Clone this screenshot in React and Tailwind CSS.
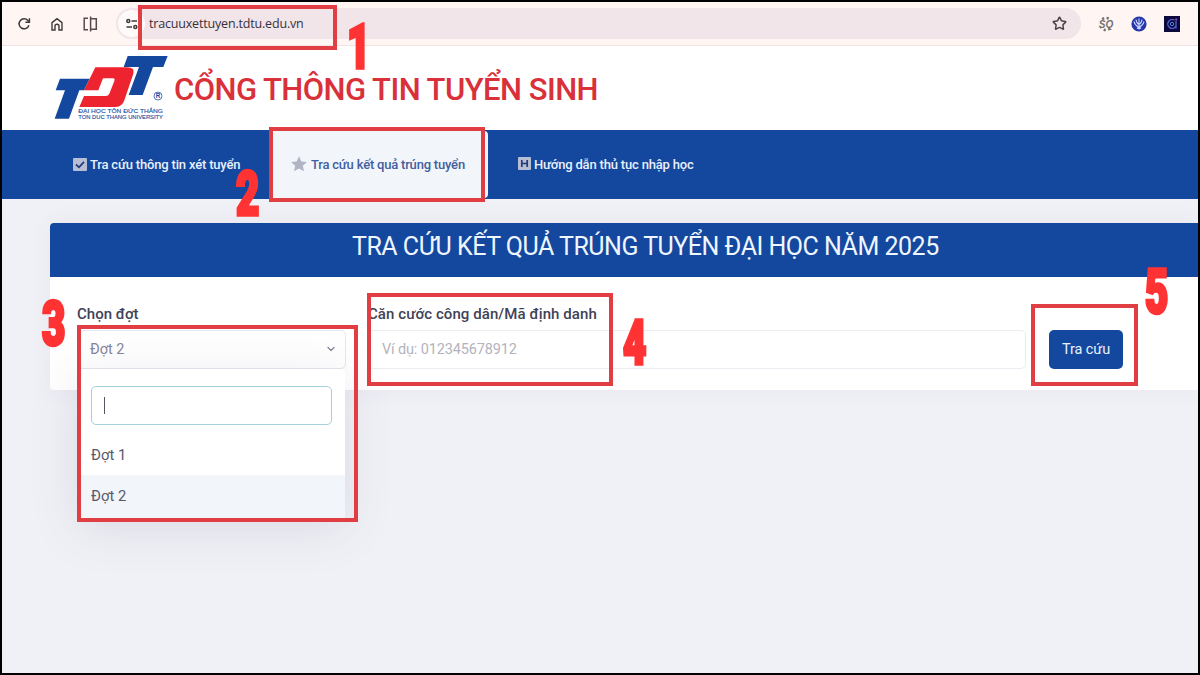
import React from "react";
import { ChevronDown, Star } from "lucide-react";

function ReloadIcon() {
  return (
    <svg className="h-[14px] w-[14px]" viewBox="0 0 14 14" fill="none" stroke="#3f3a3d" strokeWidth="1.5">
      <path d="M11.9 8.2A5 5 0 1 1 10.9 3.6L12.2 5" />
      <path d="M12.4 1.2V5.2H8.4" />
    </svg>
  );
}

function HomeIcon() {
  return (
    <svg className="h-[14px] w-[14px]" viewBox="0 0 14 14" fill="none" stroke="#3f3a3d" strokeWidth="1.4">
      <path d="M2 5.6L7 1.6L12 5.6V13H9V9.2A2 2 0 0 0 5 9.2V13H2Z" />
    </svg>
  );
}

function SplitIcon() {
  return (
    <svg className="h-4 w-4" viewBox="0 0 16 16" fill="none" stroke="#5a4a50" strokeWidth="1.5">
      <path d="M6 2.2H2.2V13.8H6" />
      <path d="M8.6 0.5V15.5" />
      <path d="M8.6 2.7H14.3V13.3H8.6" />
    </svg>
  );
}

function TuneIcon() {
  return (
    <svg className="h-3 w-3" viewBox="0 0 12 12" fill="none" stroke="#3f3a3d" strokeWidth="1.5">
      <circle cx="2.3" cy="3" r="1.5" />
      <path d="M5.5 3H11M0.5 9H6" />
      <circle cx="9.3" cy="9" r="1.5" />
    </svg>
  );
}

function Logo() {
  return (
    <svg className="h-[66px] w-[116px] shrink-0" viewBox="40 30 348 198">
      <path fill="#14489e" d="M61 101H150L133 136H119L88 221H45L76 136H48Z" />
      <path fill="#14489e" d="M264 33H384L371 66H340L309 150H267L298 66H252Z" />
      <path
        fill="#ee2330"
        d="M167 67H262Q286 67 281 86L254 166Q247 186 228 186H119L133 153H198Q206 153 209 146L224 108Q227 100 220 100H190L176 136H133Z"
      />
      <circle cx="355" cy="153" r="12" fill="none" stroke="#3461ac" strokeWidth="2.5" />
      <text x="355" y="160" textAnchor="middle" fontSize="19" fontWeight="700" fill="#14489e" fontFamily="Liberation Sans, sans-serif">R</text>
      <g fill="#23509f" stroke="#23509f" strokeWidth="0.4" fontFamily="Liberation Sans, sans-serif" fontSize="17">
        <text x="116" y="204" textLength="254" lengthAdjust="spacingAndGlyphs">ĐẠI HỌC TÔN ĐỨC THẮNG</text>
        <text x="116" y="221" textLength="254" lengthAdjust="spacingAndGlyphs">TON DUC THANG UNIVERSITY</text>
      </g>
    </svg>
  );
}

function Extensions() {
  return (
    <div className="ml-[17px] flex items-center gap-[17px]">
      <svg className="h-4 w-4" viewBox="0 0 16 16">
        <circle cx="8" cy="8" r="6" fill="none" stroke="#77716f" strokeWidth="2.4" strokeDasharray="2.2 2.5" />
        <rect x="1" y="4.500" width="14" height="7" fill="#fff5f3" />
        <text x="8" y="11.8" textAnchor="middle" fontSize="10" fontWeight="700" fontStyle="italic" fill="#77716f" fontFamily="Liberation Sans, sans-serif">SQ</text>
      </svg>
      <svg className="h-4 w-4" viewBox="0 0 16 16" fill="none">
        <circle cx="8" cy="8" r="7.6" fill="#2536a8" />
        <path stroke="#c9d2ff" strokeWidth="1.1" d="M8 2.500V13.500M3 5.500Q4 9.500 8 11M13 5.500Q12 9.500 8 11M5 3.500Q5.500 7.500 8 8.500M11 3.500Q10.500 7.500 8 8.500M6 12.500L8 11L10 12.500" />
      </svg>
      <svg className="h-4 w-4" viewBox="0 0 16 16" fill="none">
        <rect width="16" height="16" fill="#0c0a3c" />
        <path stroke="#5b62d8" strokeWidth="1.3" d="M10.500 4.200A4.400 4.400 0 1 0 11.800 10.500M12 5V12.500" />
        <circle cx="8" cy="8" r="1.7" stroke="#3d8fd8" />
        <circle cx="12.200" cy="3.500" r="1" fill="#a45be0" />
      </svg>
    </div>
  );
}

function BrowserBar() {
  return (
    <div className="flex h-11 items-center border-b border-[#f3e3e1] bg-[#fff5f3] pl-[15px]">
      <ReloadIcon />
      <div className="ml-[19px]"><HomeIcon /></div>
      <div className="ml-[18px]"><SplitIcon /></div>
      <div className="ml-[18px] flex h-[31px] w-[965px] items-center rounded-full bg-[#f1e5e9] pl-[2px] pr-[14px]">
        <div className="flex h-[27px] w-[27px] shrink-0 items-center justify-center rounded-full bg-[#fffafa]">
          <TuneIcon />
        </div>
        <span className="ml-[4px] mt-px font-['Open_Sans','Noto_Sans',sans-serif] text-[12.5px] tracking-[-0.18px] text-[#38303a]">
          tracuuxettuyen.tdtu.edu.vn
        </span>
        <Star className="ml-auto h-[15px] w-[15px] text-[#4a4046]" strokeWidth={2.4} />
      </div>
      <Extensions />
    </div>
  );
}

function NavBar() {
  return (
    <nav className="flex h-[69px] bg-[#14489e] pl-[49px] text-[13px] font-medium tracking-[-0.18px] text-[#e8f0fc]">
      <a className="flex w-[218px] items-center pl-[22px]">
        <svg className="mb-px h-[13px] w-[14px]" viewBox="0 0 14 13">
          <rect width="14" height="13" rx="1" fill="#b8bdd6" />
          <path d="M3 6.500L6 9.300L11 3.800" fill="none" stroke="#243c78" strokeWidth="1.800" />
        </svg>
        <span className="ml-[3px] whitespace-nowrap">Tra cứu thông tin xét tuyển</span>
      </a>
      <a className="my-px flex w-[219px] items-center rounded-[4px] bg-[#f2f5f9] pl-[22px] tracking-[-0.2px] text-[#4260a0]">
        <svg className="mb-[2px] h-4 w-4" viewBox="0 0 16 16" fill="#b1b4c5">
          <path d="M8 0.300L10.400 5.400L15.900 6L11.800 9.800L13 15.300L8 12.500L3 15.300L4.200 9.800L0.100 6L5.600 5.400Z" />
        </svg>
        <span className="ml-[4px] whitespace-nowrap">Tra cứu kết quả trúng tuyển</span>
      </a>
      <a className="flex items-center pl-[30px]">
        <svg className="mb-[2px] h-[13px] w-[13px]" viewBox="0 0 13 13">
          <rect width="13" height="13" rx="1" fill="#b8bdd6" />
          <path d="M3.800 3V10M9.200 3V10M3.800 6.500H9.200" fill="none" stroke="#243c78" strokeWidth="1.700" />
        </svg>
        <span className="ml-[3px] whitespace-nowrap">Hướng dẫn thủ tục nhập học</span>
      </a>
    </nav>
  );
}

function RoundSelect() {
  return (
    <div className="relative w-[269px]">
      <div className="flex h-[39px] items-center justify-between rounded-[5px] border border-[#e6e6ee] bg-white pl-3 pr-[8px] text-[14.5px] text-[#85859a]">
        <span>Đợt 2</span>
        <ChevronDown className="mb-[2px] h-3 w-3" strokeWidth={2.5} />
      </div>
      <div className="absolute left-[1px] top-[39px] z-10 h-[151px] w-[267px] rounded-[4px] bg-white pt-[17px] shadow-[0_8px_50px_rgba(82,63,105,0.13)]">
        <div className="ml-[13px] flex h-[39px] w-[241px] items-center rounded-[5px] border border-[#a5cfdd] pl-3">
          <span className="h-[17px] w-px bg-[#55555f]" />
        </div>
        <div className="mt-[9px] flex h-[41px] items-center pl-[13px] pt-px text-[14.8px] text-[#565a69]">Đợt 1</div>
        <div className="flex h-[43px] items-center bg-[#f2f5f9] pb-px pl-[13px] text-[14.8px] text-[#565a69]">Đợt 2</div>
      </div>
    </div>
  );
}

function SearchCard() {
  return (
    <section className="ml-12 mt-6 h-[167px] rounded-l-[4px] bg-white shadow-[0_0_25px_rgba(82,63,105,0.06)]">
      <div className="h-[54px] rounded-tl-[4px] bg-[#14489e] pl-[302px] pt-[6px]">
        <h2 className="whitespace-nowrap text-[25px] leading-[36px] tracking-[-0.49px] text-[#eff6ff]">
          TRA CỨU KẾT QUẢ TRÚNG TUYỂN ĐẠI HỌC NĂM 2025
        </h2>
      </div>
      <div className="flex pl-[27px] pt-[27px]">
        <div>
          <div className="mb-[6px] text-[15px] font-medium leading-5 text-[#3f4257]">Chọn đợt</div>
          <RoundSelect />
        </div>
        <div className="ml-[22px] w-[658px]">
          <div className="mb-[6px] text-[15px] font-medium leading-5 tracking-[0.08px] text-[#3f4257]">Căn cước công dân/Mã định danh</div>
          <div className="flex h-[39px] items-center rounded-[5px] border border-[#ececf2] pl-[13px] text-[14.5px] tracking-[-0.15px] text-[#b3b3bd]">
            Ví dụ: 012345678912
          </div>
        </div>
        <button className="ml-[23px] mt-[26px] h-[39px] w-[74px] rounded-[5px] bg-[#14489e] text-[14.5px] tracking-[-0.1px] text-[#e8f2ff]">
          Tra cứu
        </button>
      </div>
    </section>
  );
}

// numbered guide marks laid over the page
function Steps() {
  const box = "absolute border-4 border-[#e03e42]";
  const num = "absolute origin-left text-[61px] leading-[46px] font-black text-[#ff3333] [-webkit-text-stroke:3.5px_#ff3333] scale-x-[0.66]";
  return (
    <div className="pointer-events-none absolute -left-[2px] -top-[2px] z-20 h-[675px] w-[1200px]">
      <div className={`${box} left-[138px] top-[5px] h-[45px] w-[199px]`} />
      <div className={`${box} left-[269px] top-[127px] h-[75px] w-[216px]`} />
      <div className={`${box} left-[77px] top-[325px] h-[197px] w-[281px]`} />
      <div className={`${box} left-[367px] top-[293px] h-[93px] w-[246px]`} />
      <div className={`${box} left-[1031px] top-[304px] h-[82px] w-[107px]`} />
      <span className={`${num} left-[347px] top-[24px]`}>1</span>
      <span className={`${num} left-[236px] top-[171px]`}>2</span>
      <span className={`${num} left-[42px] top-[301px]`}>3</span>
      <span className={`${num} left-[623px] top-[320px]`}>4</span>
      <span className={`${num} left-[1145px] top-[269px]`}>5</span>
    </div>
  );
}

export default function App() {
  return (
    <div className="relative h-[675px] w-[1200px] overflow-hidden border-2 border-black bg-[#f0f1f6] font-[Roboto,sans-serif]">
      <BrowserBar />
      <header className="flex h-[84px] items-start bg-white pl-[51px] pt-[9px]">
        <Logo />
        <h1 className="ml-[5px] mt-[15px] whitespace-nowrap text-[31px] font-medium leading-10 tracking-[-0.54px] text-[#d9303a]">
          CỔNG THÔNG TIN TUYỂN SINH
        </h1>
      </header>
      <NavBar />
      <SearchCard />
      <Steps />
    </div>
  );
}
